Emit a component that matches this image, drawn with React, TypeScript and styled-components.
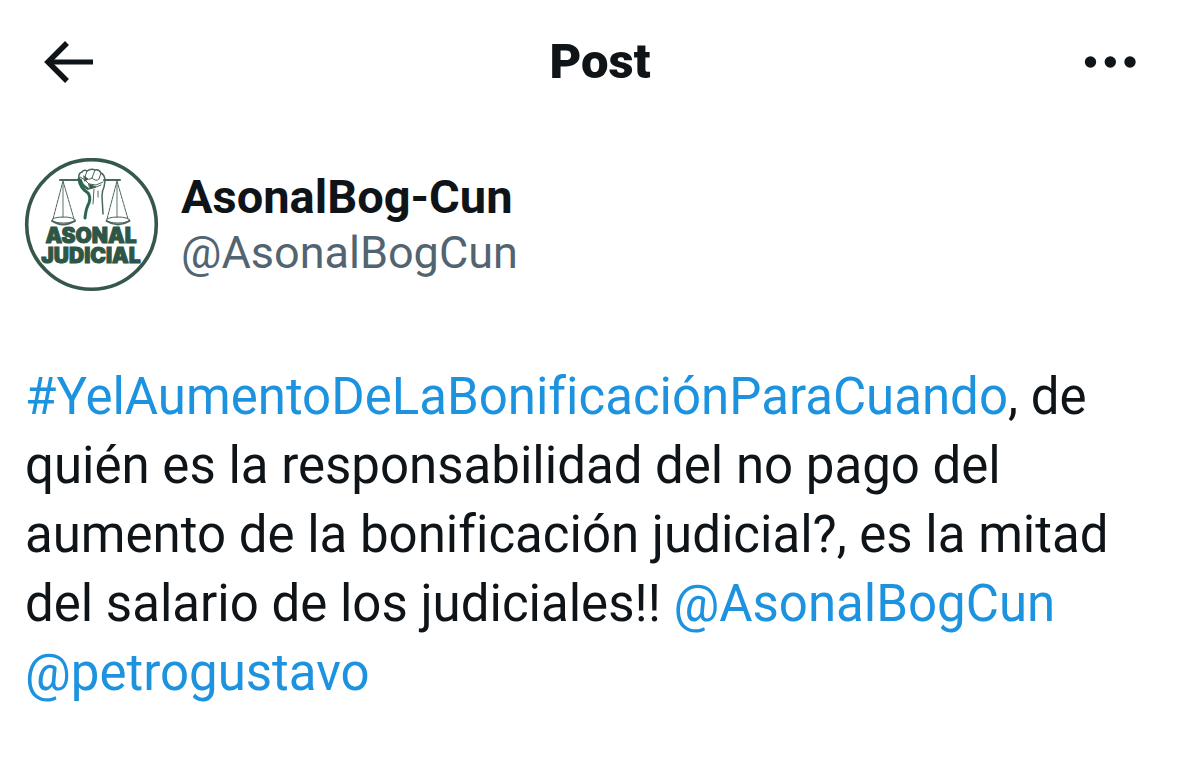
import React from "react";
import styled, { createGlobalStyle } from "styled-components";

const GlobalStyle = createGlobalStyle`
  *, *::before, *::after { box-sizing: border-box; }
  body {
    margin: 0;
    background: #ffffff;
    color: #0f1419;
    font-family: Roboto, "Liberation Sans", sans-serif;
    font-variant-ligatures: none;
  }
`;

const Page = styled.div`
  min-height: 100vh;
  background: #ffffff;
`;

const TopBar = styled.header`
  display: grid;
  grid-template-columns: 1fr auto 1fr;
  align-items: center;
  height: 124px;
  padding: 0 60px 0 40px;
`;

const Title = styled.h1`
  margin: 0;
  padding-left: 20px;
  font-size: 49px;
  line-height: 56px;
  font-weight: 900;
`;

const IconButton = styled.button<{ $side: "start" | "end" }>`
  justify-self: ${({ $side }) => $side};
  display: flex;
  padding: 0;
  border: 0;
  background: none;
  color: inherit;
  cursor: pointer;
`;

const Post = styled.article`
  padding: 34px 24px 60px;
`;

const Author = styled.div`
  display: flex;
  align-items: center;
  gap: 22px;
`;

const Names = styled.div`
  display: flex;
  flex-direction: column;
  line-height: 56px;
`;

const Name = styled.a`
  color: #0f1419;
  font-size: 47px;
  font-weight: 700;
  text-decoration: none;
`;

const Handle = styled.a`
  color: #536471;
  font-size: 45px;
  text-decoration: none;
`;

const Body = styled.p`
  margin: 70px 0 0;
  padding: 0 48px 0 1px;
  font-size: 51px;
  line-height: 69px;
`;

const Mention = styled.a`
  color: #1d93e0;
  text-decoration: none;
`;

const BackIcon = () => (
  <svg width="56" height="48" viewBox="0 0 56 48" fill="none" stroke="currentColor" strokeWidth="5" aria-hidden="true">
    <path d="M53 24H9" />
    <path d="M27 5L8 24L27 43" strokeWidth="5.500" />
  </svg>
);

const MoreIcon = () => (
  <svg width="56" height="24" viewBox="0 0 56 24" fill="currentColor" aria-hidden="true">
    <circle cx="6.500" cy="12" r="5.700" />
    <circle cx="26.300" cy="12" r="5.700" />
    <circle cx="46" cy="12" r="5.700" />
  </svg>
);

const Logo = () => (
  <svg width="135" height="134" viewBox="0 0 135 134" role="img" aria-label="Asonal Judicial">
    <circle cx="67.500" cy="66.500" r="64.800" fill="#fff" stroke="#35584a" strokeWidth="3.600" />
    <g fill="none" stroke="#4a6759" strokeWidth="1" strokeLinecap="round">
      <path d="M36 22H56M80 22H96" strokeWidth="2" />
      <path d="M39 23L29 61M39 23L50 61M93 23L83 61M93 23L104 61" strokeDasharray="3 1" />
      <path d="M39 26V59M93 26V59" strokeWidth="1.800" strokeOpacity=".5" />
      <ellipse cx="39.500" cy="62" rx="11.500" ry="3" />
      <ellipse cx="94" cy="62" rx="11.500" ry="3" />
      <path d="M28 63Q39 70 51 63M82.500 63Q94 70 105.500 63" strokeWidth="2" />
      <path d="M55 21Q54 15 58 14Q60 11 63 13Q67 10 71 12Q75 11 77 15Q81 17 81 23L80 29Q78 33 78 38L79 56" strokeWidth="1.500" />
      <path d="M63 13L61 19Q64 23 68 20L71 12M68 20Q72 24 75 21L77 15M56 19L61 22L65 26L72 27L79 24M72 29L77 27M59 26L64 30M70 31L69 46M74 33V39" />
      <path d="M55 21Q56 30 64 35Q67 39 65 45Q62 50 61 60" stroke="#2c6650" strokeWidth="3" />
      <path d="M57 22Q58 28 64 31" stroke="#2c6650" strokeWidth="2" />
      <path d="M65 26L72 29L66 31ZM60 18L64 21L61 23Z" fill="#35584a" />
    </g>
    <g fill="#2d5646" stroke="#2d5646" strokeWidth="1" fontFamily="Inter, sans-serif" fontWeight="900" textAnchor="middle">
      <text x="67" y="85" fontSize="21">ASONAL</text>
      <text x="67" y="105" fontSize="21">JUDICIAL</text>
    </g>
  </svg>
);

export default function App() {
  return (
    <Page>
      <GlobalStyle />
      <TopBar>
        <IconButton $side="start" type="button" aria-label="Back"><BackIcon /></IconButton>
        <Title>Post</Title>
        <IconButton $side="end" type="button" aria-label="More"><MoreIcon /></IconButton>
      </TopBar>
      <Post>
        <Author>
          <Logo />
          <Names>
            <Name href="#profile">AsonalBog-Cun</Name>
            <Handle href="#profile">@AsonalBogCun</Handle>
          </Names>
        </Author>
        <Body>
          <Mention href="#hashtag">#YelAumentoDeLaBonificaciónParaCuando</Mention>, de
          quién es la responsabilidad del no pago del aumento de la bonificación
          judicial?, es la mitad del salario de los judiciales!!{" "}
          <Mention href="#profile">@AsonalBogCun</Mention>{" "}
          <Mention href="#petrogustavo">@petrogustavo</Mention>
        </Body>
      </Post>
    </Page>
  );
}
